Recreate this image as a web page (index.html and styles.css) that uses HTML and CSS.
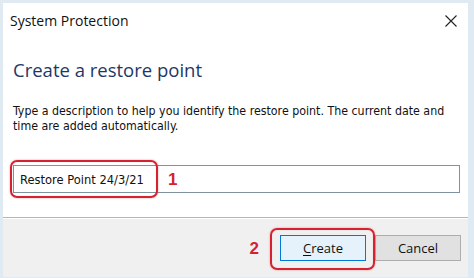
FILE: index.html
```html
<!DOCTYPE html>
<html>
<head>
<meta charset="utf-8">
<link rel="stylesheet" href="styles.css">
</head>
<body>
<div class="window">
  <div class="titlebar">
    <span class="title">System Protection</span>
    <svg class="close" width="12" height="12" viewBox="0 0 12 12"><path d="M0.5 0.5 L11.5 11.5 M11.5 0.5 L0.5 11.5" stroke="#222" stroke-width="1.1" fill="none"/></svg>
  </div>
  <div class="content">
    <h1 class="heading">Create a restore point</h1>
    <p class="desc">Type a description to help you identify the restore point. The current date and time are added automatically.</p>
    <div class="inputrow">
      <div class="input">
        <span class="hl hl1"></span>
        <span class="value">Restore Point 24/3/21</span>
        <span class="num num1">1</span>
      </div>
    </div>
  </div>
  <div class="footer">
    <span class="num num2">2</span>
    <div class="btnwrap">
      <span class="hl hl2"></span>
      <button class="btn primary"><u>C</u>reate</button>
    </div>
    <button class="btn">Cancel</button>
  </div>
</div>
</body>
</html>
```
FILE: styles.css
```css
html, body { margin: 0; padding: 0; }
body {
  width: 474px;
  height: 278px;
  background: #dfeaf2;
  overflow: hidden;
  padding: 3px 6px 1px 3px;
  box-sizing: border-box;
}
.window {
  background: #ffffff;
  height: 100%;
  display: flex;
  flex-direction: column;
}
.titlebar {
  height: 38px;
  display: flex;
  align-items: center;
  justify-content: space-between;
  padding: 0 11px 0 7px;
  flex: none;
}
.title {
  font-family: "Open Sans", sans-serif;
  font-size: 14px;
  color: #111;
  margin-top: -3px;
}
.close { margin-top: -2px; }
.content {
  flex: 1;
  padding: 0 0 0 10px;
}
.heading {
  margin: 17px 0 0 0;
  font-family: "Open Sans", sans-serif;
  font-weight: 400;
  font-size: 18.5px;
  line-height: 24px;
  color: #1e3766;
}
.desc {
  margin: 22px 0 0 0;
  font-family: "DejaVu Sans Condensed", "DejaVu Sans", sans-serif;
  font-size: 12.3px;
  line-height: 15px;
  color: #111;
  width: 448px;
}
.inputrow { margin-top: 31px; }
.input {
  position: relative;
  width: 447px;
  height: 28px;
  box-sizing: border-box;
  border: 1px solid #7f929f;
  display: flex;
  align-items: center;
  padding-left: 6px;
}
.value {
  font-family: "DejaVu Sans Condensed", "DejaVu Sans", sans-serif;
  font-size: 12.8px;
  color: #111;
}
.hl {
  position: absolute;
  border: 2px solid #d42231;
  border-radius: 7px;
  box-shadow: 0 0 2px rgba(200,30,40,0.45), inset 0 0 1px rgba(200,30,40,0.3);
  pointer-events: none;
}
.hl1 { left: -4px; top: -6px; width: 144px; height: 34px; }
.num {
  font-family: "Liberation Sans", sans-serif;
  font-weight: 700;
  font-size: 17px;
  color: #d42231;
}
.num1 { position: absolute; left: 154px; top: 4px; }
.footer {
  flex: none;
  height: 59px;
  background: #f0f0f0;
  border-top: 1px solid #b5b5b5;
  box-shadow: inset 0 1px 0 #ffffff;
  display: flex;
  align-items: center;
  justify-content: flex-end;
  padding-right: 7px;
  gap: 9px;
}
.num2 { margin-right: 12px; margin-top: 2px; }
.btnwrap { position: relative; display: flex; }
.hl2 { left: -10px; top: -7px; width: 101px; height: 38px; }
.btn {
  width: 86px;
  height: 26px;
  box-sizing: border-box;
  border: 1px solid #adadad;
  background: #e1e1e1;
  font-family: "Open Sans", sans-serif;
  font-size: 13px;
  color: #111;
  padding: 0;
  margin: 0;
}
.btn.primary {
  border: 1px solid #0078d7;
  background: #e5f1fb;
}
.btn u { text-decoration-thickness: 1px; text-underline-offset: 2px; }
```
